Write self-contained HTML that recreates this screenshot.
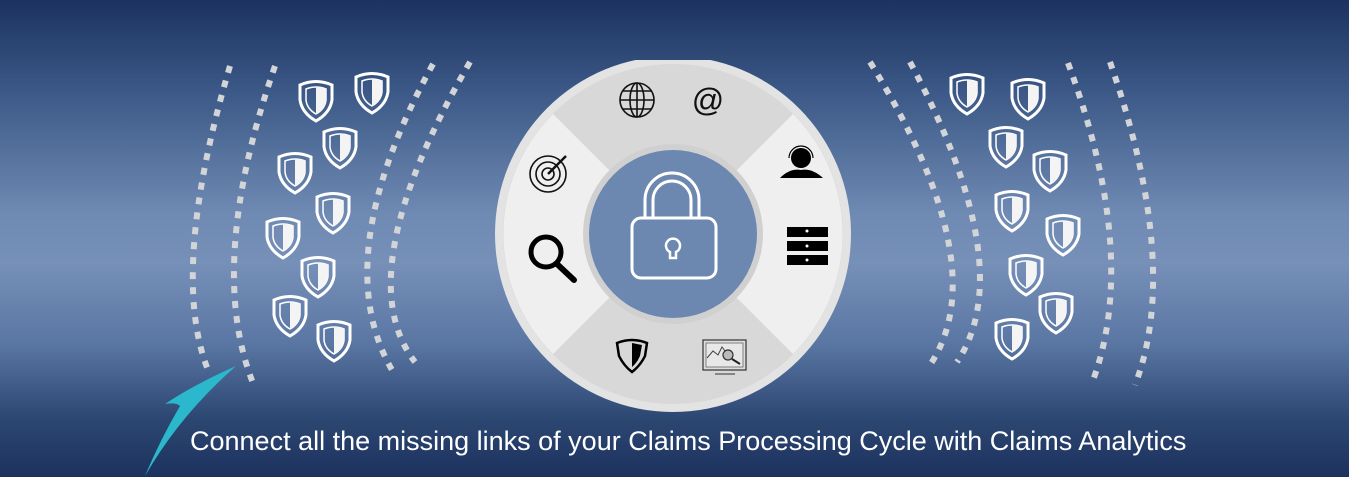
<!DOCTYPE html>
<html><head><meta charset="utf-8"><style>
html,body{margin:0;padding:0;width:1349px;height:477px;overflow:hidden}
body{background:linear-gradient(180deg,#1c3260 0%,#3d5a88 20%,#6f8ab3 45%,#7690b8 55%,#5a76a3 72%,#2c4672 88%,#1d325e 100%);font-family:"Liberation Sans",sans-serif;position:relative}
.t{position:absolute;left:190px;top:425px;color:#fff;font-size:27px;white-space:nowrap;line-height:32px}
</style></head><body>
<svg width="1349" height="477" style="position:absolute;left:0;top:0">
<defs>
<g id="sh">
<path d="M-16,-15 Q0,-22 16,-15 L16,0 Q14,13 0,21 Q-14,13 -16,0 Z" fill="none" stroke="#fff" stroke-width="3"/>
<path d="M-10,-11 Q0,-15 10,-11 L10,0 Q9,9 0,14 Q-9,9 -10,0 Z" fill="none" stroke="#fff" stroke-width="1.5"/>
<path d="M0,-13 Q5,-13 10,-11 L10,0 Q9,9 0,14 Z" fill="#f4f4f4"/>
</g>
<clipPath id="cc"><rect x="0" y="60" width="1349" height="417"/></clipPath>
</defs>
<g fill="none" stroke="#d2d4d8" stroke-width="6" stroke-dasharray="7 8">
<path d="M230,66 Q169,272 208,370"/>
<path d="M275,66 Q206,265 253,383"/>
<path d="M433,64 Q327,257 392,370"/>
<path d="M470,62 Q347,274 415,362"/>
<path d="M870,62 Q996,266 930,365"/>
<path d="M910,62 Q1020,268 957,362"/>
<path d="M1068,63 Q1140,257 1092,383"/>
<path d="M1110,62 Q1181,266 1135,385"/>
</g>
<use href="#sh" x="316" y="100"/><use href="#sh" x="372" y="92"/><use href="#sh" x="340" y="147"/>
<use href="#sh" x="295" y="172"/><use href="#sh" x="333" y="212"/><use href="#sh" x="283" y="237"/>
<use href="#sh" x="318" y="276"/><use href="#sh" x="290" y="315"/><use href="#sh" x="334" y="340"/>
<use href="#sh" x="967" y="93"/><use href="#sh" x="1028" y="98"/><use href="#sh" x="1006" y="146"/>
<use href="#sh" x="1050" y="170"/><use href="#sh" x="1012" y="210"/><use href="#sh" x="1063" y="234"/>
<use href="#sh" x="1026" y="274"/><use href="#sh" x="1056" y="312"/><use href="#sh" x="1012" y="338"/>
<path d="M145,476 Q180,415 236,366 Q195,384 165,404 Q176,402 180,406 Q160,440 145,476 Z" fill="#2bb8cc"/>
<g clip-path="url(#cc)">
<circle cx="673" cy="234" r="178" fill="#e3e3e3"/>
<circle cx="673" cy="234" r="170" fill="#d8d8d8"/>
<path d="M673,234 L793,114 A170,170 0 0 1 793,354 Z" fill="#efefef"/>
<path d="M673,234 L553,114 A170,170 0 0 0 553,354 Z" fill="#efefef"/>
<circle cx="673" cy="234" r="90" fill="#d0d0d0"/>
<circle cx="673" cy="234" r="84" fill="#6c88b0"/>
</g>
<g fill="none" stroke="#fff" stroke-width="3">
<path d="M645,218 V200 A27,27 0 0 1 699,200 V218"/>
<path d="M653,218 V200 A19,19 0 0 1 691,200 V218"/>
<rect x="632" y="218" width="84" height="60" rx="9"/>
<path d="M670,258 V252 A7,7 0 1 1 676,252 V258 Z" stroke-width="2.5"/>
</g>
<g fill="none" stroke="#111" stroke-width="1.6">
<circle cx="637" cy="100" r="17"/><ellipse cx="637" cy="100" rx="7" ry="17"/>
<line x1="637" y1="83" x2="637" y2="117"/><line x1="620" y1="100" x2="654" y2="100"/>
<line x1="623" y1="91" x2="651" y2="91"/><line x1="623" y1="109" x2="651" y2="109"/>
<circle cx="548" cy="174" r="18"/><circle cx="548" cy="174" r="12"/><circle cx="548" cy="174" r="6"/>
<line x1="548" y1="174" x2="566" y2="156" stroke-width="2.5"/>
</g>
<text x="708" y="111" font-size="32" text-anchor="middle" font-family="Liberation Sans,sans-serif" fill="#111">@</text>
<circle cx="546" cy="252" r="15" fill="none" stroke="#000" stroke-width="5"/>
<line x1="557" y1="264" x2="574" y2="280" stroke="#000" stroke-width="6" stroke-linecap="round"/>
<circle cx="801" cy="158" r="10" fill="#000"/>
<path d="M789,158 A12,12 0 0 1 813,158" fill="none" stroke="#000" stroke-width="1.2"/>
<path d="M780,178 Q790,168 801,170 Q812,168 823,178 Z" fill="#000"/>
<g fill="#000"><rect x="787" y="227" width="41" height="10"/><rect x="787" y="241" width="41" height="10"/><rect x="787" y="255" width="41" height="10"/></g>
<g fill="#fff"><circle cx="807" cy="231" r="1.5"/><circle cx="807" cy="246" r="1.5"/><circle cx="807" cy="260" r="1.5"/></g>
<path d="M617,343 Q632,337 647,343 L645,356 Q640,366 632,372 Q624,366 619,356 Z" fill="none" stroke="#000" stroke-width="2.5"/>
<path d="M632,343 L642,345 L640,356 Q637,363 632,367 Z" fill="#000"/>
<rect x="703" y="340" width="43" height="30" fill="#ddd" stroke="#333" stroke-width="1.2"/>
<rect x="706" y="343" width="37" height="24" fill="#e8e8e8" stroke="#666" stroke-width="0.8"/>
<path d="M707,358 L713,351 L718,355 L722,347 L728,355" fill="none" stroke="#444" stroke-width="1"/>
<circle cx="728" cy="355" r="5" fill="#bbb" stroke="#333" stroke-width="1.2"/>
<line x1="732" y1="359" x2="740" y2="364" stroke="#222" stroke-width="2"/>
<line x1="715" y1="374" x2="735" y2="374" stroke="#333" stroke-width="1"/>
</svg>
<div class="t">Connect all the missing links of your Claims Processing Cycle with Claims Analytics</div>
</body></html>
